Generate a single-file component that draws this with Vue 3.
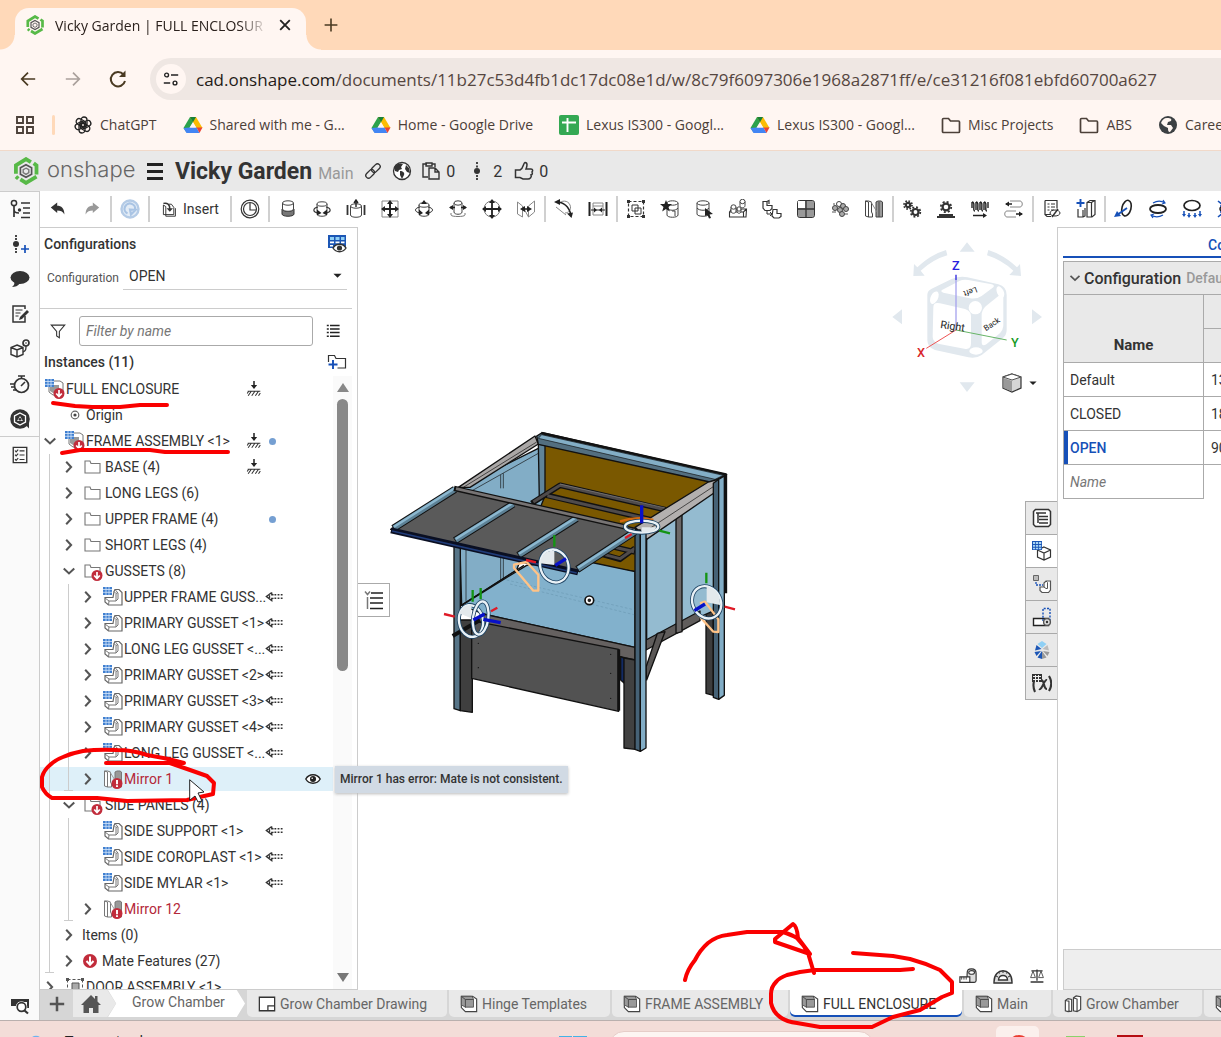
<script setup>
import { ref } from 'vue'

const S = 'fill="none" stroke="#333" stroke-width="1.2"'
const cyl = (x, y, w, h) => `<path d="M${x} ${y}v${h}c0 3 ${w} 3 ${w} 0v-${h}" fill="#fff" stroke="#444"/><ellipse cx="${x + w / 2}" cy="${y}" rx="${w / 2}" ry="2.2" fill="#fff" stroke="#444"/>`
const grid = '<path d="M0 0h9v8H0z" fill="#3f7fd0"/><path d="M0 2.5h9M0 5.3h9M3 0v8M6 0v8" stroke="#d4e6fa" stroke-width=".8"/>'
const badgeDown = '<circle cx="14" cy="14.500" r="5.500" fill="#c12c3b"/><path d="M14 11v6M11.200 14.500l2.800 3 2.800-3" fill="none" stroke="#fff" stroke-width="1.700"/>'
const badgeErr = '<circle cx="14" cy="14.500" r="5.500" fill="#c12c3b"/><path d="M14 11v4.300M14 16.300v1.700" stroke="#fff" stroke-width="1.900"/>'
const gear = (cx, cy, r) => `<circle cx="${cx}" cy="${cy}" r="${r}" fill="none" stroke="#333" stroke-width="2.200"/><circle cx="${cx}" cy="${cy}" r="${r + 1.8}" fill="none" stroke="#333" stroke-width="1.800" stroke-dasharray="${(r + 1.8) * 0.3927} ${(r + 1.8) * 0.3927}"/>`

const icons = {
  undo: '<path d="M1 8l8-6v4c5 0 9 3 9 11-2-4-5-5-9-5v3z" fill="#333"/>',
  redo: '<path d="M19 8l-8-6v4c-5 0-9 3-9 11 2-4 5-5 9-5v3z" fill="#999"/>',
  update: '<circle cx="10" cy="10" r="8.500" fill="#e3ecf6" stroke="#b4cbe6" stroke-width="2.400"/><path d="M7.500 14.500A5.300 5.300 0 1 1 15 11M10 10.500l5.500.5-4.500 4.500z" fill="none" stroke="#a9c4e4" stroke-width="2.200"/>',
  insert: `<path d="M3 5v12h13V8l-3-4h-3" ${S}/><path d="M3 3c5-1 8 1 8 7" fill="none" stroke="#333" stroke-width="1.800"/><path d="M7 9h8l-4 4.500z" fill="#333"/><path d="M3 5l3 2v12h12V9" ${S}/>`,
  clock: `<circle cx="10" cy="10" r="8.800" ${S}/><circle cx="10" cy="10" r="6.500" ${S}/><path d="M10 4v7h6" ${S}/>`,
  fasten: '<path d="M4 10v5c0 3 12 3 12 0v-5c-2 3-10 3-12 0z" fill="#777" stroke="#333"/>' + cyl(4.5, 4, 11, 6),
  revolve: cyl(5, 5, 10, 10) + '<path d="M6 8c-5 1-6 5 0 6M14 8c5 1 6 5 0 6" fill="none" stroke="#333" stroke-width="1.200"/><path d="M5 10.500v6L9.500 14zM15 10.500v6L10.500 14z" fill="#222"/>',
  slider: '<path d="M1.500 6v10M18.500 6v10" stroke="#333" stroke-width="1.800"/>' + cyl(4.5, 7, 11, 9) + '<path d="M10 1v7M8 4l2-3 2 3" fill="none" stroke="#222" stroke-width="1.400"/>',
  planar: '<path d="M2 2h16v16H2z" fill="none" stroke="#888"/><path d="M10 3v14M3 10h14" stroke="#222" stroke-width="2"/><path d="M7 5l3-4 3 4zM7 15l3 4 3-4zM5 7l-4 3 4 3zM15 7l4 3-4 3z" fill="#222"/>',
  cylindrical: cyl(5, 6, 10, 9) + '<path d="M6 8c-6 1-6 5 0 6M14 8c6 1 6 5 0 6" fill="none" stroke="#333"/><path d="M7 5l3-4 3 4zM5 10.500v6L9 14zM15 10.500v6L11 14z" fill="#222"/>',
  pin: cyl(6, 4, 8, 9) + '<path d="M3 14v2c0 2 14 2 14 0v-2" fill="none" stroke="#777"/><path d="M2 8.500h5M13 8.500h5" stroke="#222" stroke-width="1.600"/><path d="M5 6v5L1 8.500zM15 6v5l4-2.500z" fill="#222"/>',
  ball: '<circle cx="10" cy="10" r="8" fill="none" stroke="#777"/><path d="M10 2v16M1 10h18" stroke="#222" stroke-width="1.800"/><path d="M7 4l3-4 3 4zM7 16l3 4 3-4zM4 7l-4 3 4 3zM16 7l4 3-4 3z" fill="#222"/>',
  parallel: '<path d="M1.500 3l5 4v11l-5-3zM18.500 2l-6 5v11l6-5zM6.500 7l6 11" fill="none" stroke="#888"/><path d="M6 10h8" stroke="#222" stroke-width="1.600"/><path d="M9 7v6l-5-3zM11 7v6l5-3z" fill="#222"/>',
  tangent: '<path d="M5 5c2-4 9-4 11 1s-2 8-5 8M2 8l10 8" fill="none" stroke="#888"/><path d="M2 3c8 0 13 5 15 13" fill="none" stroke="#222" stroke-width="1.600"/><path d="M0 3l6-3v6zM13 14.500l6-1-1.500 5.500z" fill="#222"/>',
  width: '<path d="M1.500 3v14M18.500 3v14" stroke="#222" stroke-width="2"/><path d="M5 4h10v12H5zM5 7h10" fill="none" stroke="#888"/><path d="M3 11h14" stroke="#222"/><path d="M6 8.500v5L9 11zM14 8.500v5L11 11z" fill="#222"/>',
  group: '<path d="M2.500 2.500h15v15h-15z" fill="none" stroke="#333" stroke-width="1.200" stroke-dasharray="3 2"/><path d="M1 1h3v3H1zM16 1h3v3h-3zM1 16h3v3H1zM16 16h3v3h-3z" fill="#333"/><path d="M6 6h6v6H6zM9 9h6v6H9z" fill="none" stroke="#333"/>',
  matefav: cyl(7, 4, 11, 12) + '<path d="M7 9c2 3 9 3 11 0M12 12h3v5" fill="none" stroke="#444"/><path d="M6 1l1.600 4H12L8.500 8l1.300 4.500L6 10l-3.800 2.500L3.500 8 0 5h4.400z" fill="#222"/>',
  mateconn: cyl(3, 4, 12, 11) + '<path d="M3 9c2 3 10 3 12 0" fill="none" stroke="#444"/><path d="M11 9l8 6-3.500.5L17 19l-2 .5-1.500-3.500L11 17z" fill="#222"/>',
  replicate: '<path d="M1.500 13l2-3h15l-.5 8H1.500zM1.500 13h14l3-3M15.500 13v5" fill="#fff" stroke="#333" stroke-width="1.100"/>' + cyl(3, 8, 5, 4) + cyl(12, 2.5, 5, 4) + cyl(9, 10, 4, 2),
  pattern: '<path d="M1 2.500h4v4h5v3l-2 2H3L1 9zM5 2.500l2-1v3.500M11 10.500h4v4h4v3l-2 1.500h-5l-2-2z" fill="#fff" stroke="#333" stroke-width="1.200"/><path d="M5 12v3h5M8 13l2 2-2 2" fill="none" stroke="#333"/>',
  linear: '<path d="M1.500 3.500c0-1 .5-2 2-2h13c1 0 2 1 2 2v13c0 1-1 2-2 2h-13c-1 0-2-1-2-2z" fill="#999" stroke="#333"/><path d="M2 2h7v7H2z" fill="#fff"/><path d="M10 1.500v17M1.500 10h17" stroke="#333" stroke-width="1.300"/>',
  circular: '<g fill="#aaa" stroke="#444"><circle cx="9" cy="5" r="2.500" fill="#fff"/><circle cx="5" cy="9" r="2.500"/><circle cx="13" cy="7" r="2.500"/><circle cx="10" cy="11" r="2.500"/><circle cx="16" cy="10" r="2.500"/><circle cx="12" cy="15" r="2.500"/></g><path d="M3 5h2M2 13h4M15 15h3" stroke="#555"/>',
  mirror: '<path d="M1.500 2l3 1v15l-3-1zM1.500 2h3l3 1v10l1 2v3h-4" fill="#fff" stroke="#444"/><path d="M12 14V3l2-1h3l1.500 1v15H12z" fill="#999" stroke="#444"/><path d="M15 3v15" stroke="#444"/><path d="M7 3l6 10" stroke="#888"/>',
  gear: gear(6, 6, 2.2) + gear(13.5, 13, 3),
  rack: gear(10, 8, 3.4) + '<path d="M3 15h14v2h2v2H1v-2h2z" fill="#333"/>',
  screw: '<path d="M2 3c4 0 0 9 3 9M6 3c4 0 0 9 3 9M10 3c4 0 0 9 3 9M14 3c4 0 0 9 3 9M2 3v6M6 3v8M10 3v8M14 3v8M18 3v6" fill="none" stroke="#222" stroke-width="1.400"/><path d="M3 16.500h12" stroke="#222" stroke-width="1.500"/><path d="M13 14l4 2.500-4 2.500z" fill="#222"/>',
  belt: '<path d="M6 2h10c3 0 3 6 0 6H6M12 12H3c-3 0-3 6 0 6h9" fill="none" stroke="#888"/><path d="M2 5h6M12 15h6" stroke="#222" stroke-width="1.500"/><path d="M5 2.500v5L1 5zM15 12.500v5l4-2.500z" fill="#222"/>',
  bom: '<path d="M3 1.500h12v8M3 1.500v14h6M3 15.500l2 2h4" fill="none" stroke="#333" stroke-width="1.200"/><path d="M5.500 5h2M9 5h4M5.500 8h2M9 8h4M5.500 11h2M9 11h3" stroke="#333"/><ellipse cx="13" cy="14" rx="5" ry="3" fill="#fff" stroke="#333"/><path d="M10 18l6-8" stroke="#333" stroke-width="1.400"/>',
  addpart: '<path d="M4.500 0v8M.5 4h8" stroke="#1650b8" stroke-width="1.900"/><path d="M2 10v8h5V11M7 18l2-1V9M11 3.500l3-2h5v14l-3 2.500h-5zM11 3.500h4.500v14M15.500 3.500l3-2" fill="none" stroke="#333" stroke-width="1.200"/>',
  arrow1: '<ellipse cx="12.500" cy="9" rx="4.500" ry="8" transform="rotate(15 12 9)" fill="none" stroke="#222" stroke-width="1.600"/><path d="M13 9l-10 7" stroke="#1650b8" stroke-width="1.800"/><path d="M0 18l3-6 4 5z" fill="#1650b8"/>',
  arrow2: '<ellipse cx="10" cy="10" rx="8" ry="4" fill="none" stroke="#222" stroke-width="1.800"/><path d="M5 4c5-3 9-2 12 0M15 16c-5 3-9 2-12 0M15 1l2 3-3 1M5 19l-2-3 3-1" fill="none" stroke="#1650b8" stroke-width="1.200"/>',
  arrow3: '<ellipse cx="10" cy="6.500" rx="8" ry="5" fill="none" stroke="#222" stroke-width="1.700"/><path d="M2 12v4M7 14v3M13 14v3M18 12v4" stroke="#1650b8" stroke-width="1.500"/><path d="M0 15h4l-2 3zM5 16h4l-2 3zM11 16h4l-2 3zM16 15h4l-2 3z" fill="#1650b8"/>',
  arrow4: '<ellipse cx="12" cy="10" rx="8" ry="4" fill="none" stroke="#222" stroke-width="1.600"/><path d="M2 2l6 5M2 18l6-5M8 3v4H4M8 17v-4H4" fill="none" stroke="#1650b8" stroke-width="1.600"/>',
  tree: '<circle cx="4" cy="4" r="2.600" fill="none" stroke="#333" stroke-width="1.500"/><path d="M4 7v3c0 3 1 4 5 4M4 10v8M11 4h9M13 9h7M13 14h7M11 18.500h9" fill="none" stroke="#333" stroke-width="1.700"/><circle cx="9.500" cy="11" r="1.700" fill="#333"/>',
  version: '<path d="M6 1v2M6 4v2M6 14v2M6 17v2" stroke="#333" stroke-width="1.800"/><circle cx="6" cy="10" r="3" fill="#333"/><path d="M15 11v8M11 15h8" stroke="#1650b8" stroke-width="1.700"/>',
  comment: '<ellipse cx="10" cy="8.500" rx="9.500" ry="6.500" fill="#333"/><path d="M4 12c1 3 0 4-2 6 3 0 6-1 8-4z" fill="#333"/>',
  notes: `<path d="M15 12v6H3V2h12v3" fill="none" stroke="#333" stroke-width="1.500"/><path d="M5.500 6h7M5.500 9h5M5.500 12h3" ${S}/><path d="M17 6l2 2-7 7-3 1 1-3z" fill="#333"/>`,
  cubeq: '<path d="M7 6l6 2.500v7L7 18l-6-2.500v-7zM1 8.500l6 2.500 6-2.500M7 11v7" fill="none" stroke="#333" stroke-width="1.400"/><circle cx="16" cy="4" r="3" fill="none" stroke="#333" stroke-width="1.700"/><path d="M16 7c0 3 0 5-3 6" fill="none" stroke="#333" stroke-width="1.300"/><circle cx="16" cy="4" r=".8" fill="#333"/>',
  timer: '<circle cx="11.500" cy="11.500" r="7" fill="none" stroke="#333" stroke-width="1.700"/><path d="M8 2h7M11.500 2v3M11 12l4-4M0 10h5M1 13h4M3 16h4" stroke="#333" stroke-width="1.600"/>',
  learn: '<circle cx="10" cy="10" r="9.800" fill="#333"/><path d="M13 13l6 6.500V11z" fill="#333"/><path d="M10 4l5.500 3v6L10 16l-5.500-3V7z" fill="none" stroke="#fff" stroke-width="1.300"/><path d="M7 12l3-5 3 5z" fill="#ddd"/><circle cx="10" cy="10.300" r="1.300" fill="#333"/>',
  checklist: '<path d="M2.500 1.500h15v17h-15z" fill="none" stroke="#333" stroke-width="1.500"/><path d="M9.500 5.500H15M9.500 10H15M9.500 15H15M4.500 5l1.200 1.500L8 4M4.500 9.500l1.200 1.500L8 8.500M4.500 14.500l1.200 1.500L8 13.500" fill="none" stroke="#333" stroke-width="1.300"/>',
  searchtab: '<path d="M1 4h18v3L8 7v4H1z" fill="#333"/><path d="M18 7v6" stroke="#333" stroke-width="2"/><circle cx="11.500" cy="12" r="5.800" fill="#fafafa"/><circle cx="11.500" cy="12" r="4.300" fill="#fff" stroke="#333" stroke-width="1.700"/><path d="M14.500 15.500l3.500 3" stroke="#333" stroke-width="2.200"/>',
  asm: '<path d="M4 6l5-4h6l3 2v12H8l-4-3z" fill="#fff" stroke="#777"/><path d="M5 8l3-2h6v8H8l-3-2z" fill="#999"/>' + grid + badgeDown,
  part: '<path d="M11 4.500l1-2h4l3 3V18H5.500l-3.500-3v-4.500h8z" fill="#fff" stroke="#666" stroke-width="1.200"/><path d="M2 11l4 3h7V6.500l-2-2M6 14l-.5 4M13 14l2-2V6l-3-3.500M13 6.500l2-1" fill="none" stroke="#777"/>' + grid,
  mirrorerr: '<path d="M1.500 2l3 1v15l-3-1zM1.500 2h3l3 1v10l1 2v3h-4" fill="#fff" stroke="#777"/><path d="M12 14V3l2-1h3l1.500 1v15H12z" fill="#999" stroke="#777"/><path d="M7 3l6 10" stroke="#999"/>' + badgeErr,
  folder: '<path d="M2 16V4h5l1 2.500h9V16z" fill="#fff" stroke="#777" stroke-width="1.100"/>',
  foldererr: '<path d="M2 16V4h5l1 2.500h9V16z" fill="#fff" stroke="#777" stroke-width="1.100"/>' + badgeDown,
  down: '<circle cx="9" cy="10" r="7" fill="#c12c3b"/><path d="M9 5.500v7M5.500 10L9 13.800l3.500-3.800" fill="none" stroke="#fff" stroke-width="2"/>',
  origin: '<circle cx="10" cy="10" r="3.800" fill="none" stroke="#666" stroke-width="1.200"/><circle cx="10" cy="10" r="1.600" fill="#444"/>',
  door: '<path d="M2.500 2.500h15v14h-15z" fill="none" stroke="#555" stroke-dasharray="3 2"/><path d="M1 1h3v3H1zM16 1h3v3h-3z" fill="#555"/><path d="M7 6h7v9H7z" fill="#aaa" stroke="#555"/>',
  ground: '<path d="M10 1v6" stroke="#222" stroke-width="1.700"/><path d="M6.500 5.500h7L10 10z" fill="#222"/><path d="M3 12.500h14M3.500 17.500l3.500-5M7.500 17.500l3.500-5M11.500 17.500l3.500-5M15 17.500l2-3M2.500 15l1.500-2.500" stroke="#333" stroke-width="1.200"/>',
  infix: '<path d="M7.500 5L1.500 9.500l6 4.500v-2.500h2M7.500 5v2.500h2M5 8v3" fill="none" stroke="#333" stroke-width="1.500"/><path d="M10.500 7.500H20M10.500 11.500H20" stroke="#333" stroke-width="1.700" stroke-dasharray="2 1.500"/>',
  eye: '<path d="M1 10c4-7 14-7 18 0-4 7-14 7-18 0z" fill="#fff" stroke="#222" stroke-width="1.800"/><circle cx="10" cy="10" r="3.800" fill="#222"/><circle cx="9" cy="9" r="1" fill="#fff"/>',
  cfgeye: '<path d="M1 1h18v13H1z" fill="#1c56b5"/><path d="M3 3h4v3H3zM8.500 3h4v3h-4zM14 3h3.500v3H14z" fill="#8fd0f5"/><path d="M3 7.500h4v1.700H3zM8.500 7.500h4v1.700h-4zM14 7.500h3.500v1.700H14zM3 11h3v1.500H3z" fill="#fff"/><path d="M6 14c3-5 10-5 13 0-3 5-10 5-13 0z" fill="#fff" stroke="#333" stroke-width="1.400"/><circle cx="12.500" cy="14" r="2.600" fill="#333"/>',
  funnel: '<path d="M2.500 3.500h15l-6 7v7l-3-2v-5z" fill="none" stroke="#333" stroke-width="1.200"/>',
  list: '<path d="M1 3h2.500M1 7.500h2.500M1 12h2.500M1 16.500h2.500M5 3h12M5 7.500h12M5 12h12M5 16.500h12" stroke="#222" stroke-width="1.900"/>',
  addfolder: '<path d="M1.500 10V3.500h6l1.500 3h9.500V16h-8" fill="none" stroke="#333" stroke-width="1.200"/><path d="M6 8v9M1.500 12.500h9" stroke="#1650b8" stroke-width="1.900"/>',
  flyout: '<path d="M1 1.500l2.500 3L6 1.500M3.500 7v12" fill="none" stroke="#777" stroke-width="1.500"/><path d="M7 3h12M6 8h13M6 13h13M6 18.500h13" stroke="#222" stroke-width="1.300"/>',
  p1: '<path d="M3.500 1.500h13l2 2v13l-2 2h-13l-2-2v-13z" fill="#fff" stroke="#333" stroke-width="1.500"/><path d="M4 5h10M7 8.500h9M7 11.500h9M7 15h9M6 5v10" stroke="#333" stroke-width="1.500"/>',
  p2: '<path d="M12 6l6.500 3v7L12 19l-6.500-3V9zM5.500 9l6.500 3 6.500-3M12 12v7" fill="#fff" stroke="#333" stroke-width="1.200"/><path d="M0 0h10v9H0z" fill="#1c56b5"/><path d="M1 1h2.200v2H1zM4 1h2.200v2H4zM7 1h2.200v2H7zM1 4h2.200v1.700H1zM4 4h2.200v1.700H4zM7 4h2.200v1.700H7zM1 6.700h2.200v1.500H1zM4 6.700h2.200v1.500H4zM7 6.700h2.200v1.500H7z" fill="#a9d5f5"/>',
  p3: '<path d="M1.500 1.500h5v5h-5z" fill="#bbb" stroke="#666"/><path d="M4 8v3h7" fill="none" stroke="#1650b8" stroke-width="1.300" stroke-dasharray="2 1"/><path d="M8 13h4V9l2-2h4.500v9l-2 2.500H10l-2-2z" fill="#fff" stroke="#555" stroke-width="1.200"/><path d="M12 13l2 1.500h1.500V8.500L14 7" fill="none" stroke="#555"/>',
  p4: '<path d="M1.500 11.500h15v7h-15z" fill="#fff" stroke="#222" stroke-width="1.400"/><path d="M11 14V1.500h7V15" fill="none" stroke="#1650b8" stroke-width="1.400" stroke-dasharray="2 1.300"/><circle cx="15" cy="15" r="3.400" fill="#ddd" stroke="#555" stroke-width="1.400"/><circle cx="15" cy="15" r="1.200" fill="#333"/>',
  p5: '<path d="M10 1l4.500 3L10 8 5.500 4z" fill="#8fd0f5"/><path d="M4.500 5l5 4-6.500 1.500zM2.500 12l6.500-1-4.500 5zM5.500 17.500L10 11v8z" fill="#1c56b5"/><path d="M15.500 5l-5 4 6.500 1.500z" fill="#bbb"/><path d="M17.500 12l-6.500-1 4.500 5zM14.500 17.500L10 11v8z" fill="#999"/>',
  p6: '<path d="M2 8c-1 4-1 7 1 11M17 3c3 5 3 10 0 15M7 16c3 2 5-10 8-9M9 7c4 0 2 9 6 9" fill="none" stroke="#333" stroke-width="2.100"/><path d="M0 1h10v8H0z" fill="#333"/><path d="M1 3.500h8M1 6.500h8M3.500 2v7M6.500 2v7" stroke="#eee"/>',
  drawing: '<path d="M1.500 2.500h17v15h-17zM11 17v-5h7" fill="#fff" stroke="#333" stroke-width="1.400"/>',
  asmtab: '<path d="M1.500 1.500H14l4.500 3V18.500H6L1.500 14z" fill="#fff" stroke="#444" stroke-width="1.300"/><path d="M1.500 1.500H13l2 3v9H6L1.500 11z" fill="#999" stroke="#555"/><path d="M1.500 1.500L6 5h9M6 5v9" fill="none" stroke="#444"/>',
  parttab: '<path d="M1.500 6l3-2 4 1v13l-4 .5-3-1zM1.500 6l4 1v11M10.500 3l3-2 5 1v14l-4 2.500-4-1zM10.500 3l4 1.500v14" fill="#fff" stroke="#444" stroke-width="1.300"/>',
  tape: '<path d="M9 8c0-5 1-6 5-6s5 2 5 5v8c0 1-1 2-2 2H9z" fill="#ddd" stroke="#333" stroke-width="1.300"/><path d="M1 11h11v6H1z" fill="#fff" stroke="#333" stroke-width="1.300"/><path d="M3 11v3M5.500 11v3M8 11v3" stroke="#333"/><ellipse cx="14" cy="6" rx="3.200" ry="2" fill="#fff" stroke="#333" stroke-width="1.200"/>',
  protractor: '<path d="M1 16C1 1 19 1 19 16v1H1z" fill="#ddd" stroke="#333" stroke-width="1.400"/><path d="M5.500 14c0-6 9-6 9 0z" fill="#fff" stroke="#333" stroke-width="1.400"/><path d="M3 10l2 1M10 5v2M17 10l-2 1M5.500 6l1 1.500M14.500 6l-1 1.500" stroke="#333"/>',
  scale: '<path d="M10 2v14M3 3.500h14M2 17.500h16" stroke="#333" stroke-width="1.600"/><path d="M5 4l-3 8h6zM15 4l-3 8h6z" fill="none" stroke="#333"/>',
  home: '<path d="M10 1L0 11h2.500v8H8v-5h4v5h5.500v-8H20l-3.500-3.500V2H14v3z" fill="#555"/>',
  link: '<g transform="rotate(-45 10 10)" fill="none" stroke="#333" stroke-width="1.500"><rect x="0" y="7" width="11" height="6" rx="3"/><rect x="9" y="7" width="11" height="6" rx="3"/></g>',
  globe: '<circle cx="10" cy="10" r="8.500" fill="#fff" stroke="#333" stroke-width="1.300"/><path d="M3 5c3-3 6-3 8-2l-2 3 1 2-3 1-1 2-3-1-1-3zM8 10c3 0 5 2 4 4l-2 4-2-4zM14 4l3 3 1 5-3-1-2-3z" fill="#333"/>',
  copy: '<path d="M6 3H2v13h5M14 6V3h-3M5 2h6v3H5zM8 7h6l4 4v7H8zM14 7v4h4" fill="none" stroke="#333" stroke-width="1.400"/>',
  dots: '<path d="M10 1v2M10 4.500v2M10 14v2M10 17v2" stroke="#333" stroke-width="1.800"/><circle cx="10" cy="10" r="3" fill="#333"/>',
  thumb: '<path d="M1.500 9H6c4-2 3-7 5-7.500 3 0 2 4 1 6.500h5c2 0 2 2 1 3 1 1 0 3-1 3 1 2-1 4-3 4H9l-3-1.500H1.500z" fill="none" stroke="#333" stroke-width="1.500"/>',
  logo: '<path d="M2.800 12V6L10 1.500l3.500 2.200M15.500 4.500l2 1.500v6.500M17.500 14L10 18.500l-4-2.500M4.500 15.500L2.800 14" fill="none" stroke="#57b947" stroke-width="2.700"/><path d="M10 5.500l4 2.200v4.600L10 14.500l-4-2.200V7.700z" fill="none" stroke="#555" stroke-width="1.200"/><path d="M10 8l2 1v2.200l-2 1.200-2-1.200V9z" fill="none" stroke="#777"/>',
  apps: '<path d="M2 2h6v6H2zM12 2h6v6h-6zM2 12h6v6H2zM12 12h6v6h-6z" fill="none" stroke="#4c4039" stroke-width="1.900"/>',
  gpt: '<g fill="none" stroke="#222" stroke-width="1.300"><rect x="8" y="2" width="6" height="10" rx="3"/><rect x="8" y="2" width="6" height="10" rx="3" transform="rotate(60 10 10)"/><rect x="8" y="2" width="6" height="10" rx="3" transform="rotate(120 10 10)"/><rect x="8" y="2" width="6" height="10" rx="3" transform="rotate(180 10 10)"/><rect x="8" y="2" width="6" height="10" rx="3" transform="rotate(240 10 10)"/><rect x="8" y="2" width="6" height="10" rx="3" transform="rotate(300 10 10)"/></g>',
  drive: '<path d="M7 2h6l-3 5-6.500 10.500L.5 13z" fill="#2ba24c"/><path d="M7 2h6l6.500 11h-6z" fill="#fbbc04"/><path d="M7 2h6l-3 5.200z" fill="#188038"/><path d="M.5 13l3 5h13l-3-5.500h-7z" fill="#4285f4"/><path d="M13.500 12.500h6l-3 5.500z" fill="#ea4335"/><path d="M10 7.500l3 5H7z" fill="#fff6f1"/>',
  sheet: '<rect width="20" height="20" rx="2" fill="#34a853"/><path d="M3 7.500h14M8.500 3v14" stroke="#fff" stroke-width="1.900"/>',
  bfolder: '<path d="M1.500 16.500v-12q0-1 1-1h5l2 2.500h8q1 0 1 1v9.500q0 1-1 1h-15q-1 0-1-1z" fill="none" stroke="#4c4039" stroke-width="1.700"/>',
  bglobe: '<circle cx="10" cy="10" r="9" fill="#3c4043"/><path d="M9 3c4 0 5 1 4 3l-3 1-1 3 4 0 2 3-3 4c-2 0-2-2-2-4l-4-2-3-3c1-3 3-5 6-5z" fill="#fff6f1"/>',
  back: '<path d="M18 10H3M10 3l-7 7 7 7" fill="none" stroke="#4a3a22" stroke-width="1.900"/>',
  fwd: '<path d="M2 10h15M10 3l7 7-7 7" fill="none" stroke="#aaa09c" stroke-width="1.900"/>',
  reload: '<path d="M15.500 5.500A7.200 7.200 0 1 0 17 12" fill="none" stroke="#4a3a22" stroke-width="2"/><path d="M17.500 1.500V8H11z" fill="#4a3a22"/>',
  tune: '<path d="M10 5h9M1 15h8" stroke="#222" stroke-width="1.800"/><circle cx="4.500" cy="5" r="2.400" fill="none" stroke="#222" stroke-width="1.700"/><circle cx="15" cy="15" r="2.400" fill="none" stroke="#222" stroke-width="1.700"/>',
  cross: '<path d="M4 4l12 12M16 4L4 16" stroke="#222" stroke-width="2.300"/>',
  plus: '<path d="M10 2v16M2 10h16" stroke="#4a3a22" stroke-width="2"/>',
  plusg: '<path d="M10 2v16M2 10h16" stroke="#555" stroke-width="2.800"/>',
  right: '<path d="M6 2.500l7 7.500-7 7.500" fill="none" stroke="#555" stroke-width="2.900"/>',
  downc: '<path d="M2.500 6.500l7.500 7 7.500-7" fill="none" stroke="#555" stroke-width="2.900"/>',
  cube: '<path d="M10 1l9 3v11l-9 4-9-4V4z" fill="#d5d5d5" stroke="#333" stroke-width="1.200"/><path d="M1 4l9 3 9-3-9-3z" fill="#fff" stroke="#555"/><path d="M1.500 5L10 8v10.500L1.500 15z" fill="#999"/>',
  caret: '<path d="M1 6h18l-9 9z" fill="#222"/>'
}

const bookmarks = [
  ['gpt', 'ChatGPT'], ['drive', 'Shared with me - G...'], ['drive', 'Home - Google Drive'], ['sheet', 'Lexus IS300 - Googl...'],
  ['drive', 'Lexus IS300 - Googl...'], ['bfolder', 'Misc Projects'], ['bfolder', 'ABS'], ['bglobe', 'Careers']
]
const toolGroups = [
  ['clock'],
  ['fasten', 'revolve', 'slider', 'planar', 'cylindrical', 'pin', 'ball', 'parallel'],
  ['tangent', 'width'],
  ['group', 'matefav', 'mateconn', 'replicate', 'pattern', 'linear', 'circular', 'mirror'],
  ['gear', 'rack', 'screw', 'belt'],
  ['bom', 'addpart'],
  ['arrow1', 'arrow2', 'arrow3', 'arrow4']
]
const rail = ['tree', 'version', 'comment', 'notes', 'cubeq', 'timer', 'learn']
const part = (text, chev) => ({ text, lvl: 3, icon: 'part', chev, infix: true, g: 2 })
const rows = [
  { text: 'FULL ENCLOSURE', lvl: 0, icon: 'asm', ground: true, slot: true },
  { text: 'Origin', lvl: 1, icon: 'origin' },
  { text: 'FRAME ASSEMBLY <1>', lvl: 1, icon: 'asm', chev: 'downc', ground: true, dot: true },
  { text: 'BASE (4)', lvl: 2, icon: 'folder', chev: 'right', ground: true, slot: true, g: 1 },
  { text: 'LONG LEGS (6)', lvl: 2, icon: 'folder', chev: 'right', g: 1 },
  { text: 'UPPER FRAME (4)', lvl: 2, icon: 'folder', chev: 'right', dot: true, g: 1 },
  { text: 'SHORT LEGS (4)', lvl: 2, icon: 'folder', chev: 'right', g: 1 },
  { text: 'GUSSETS (8)', lvl: 2, icon: 'foldererr', chev: 'downc', g: 1 },
  part('UPPER FRAME GUSS...', 'right'),
  part('PRIMARY GUSSET <1>', 'right'),
  part('LONG LEG GUSSET <...', 'right'),
  part('PRIMARY GUSSET <2>', 'right'),
  part('PRIMARY GUSSET <3>', 'right'),
  part('PRIMARY GUSSET <4>', 'right'),
  part('LONG LEG GUSSET <...', 'right'),
  { text: 'Mirror 1', lvl: 3, icon: 'mirrorerr', chev: 'right', err: true, eye: true, hover: true, g: 2, end: true },
  { text: 'SIDE PANELS (4)', lvl: 2, icon: 'foldererr', chev: 'downc', g: 1 },
  part('SIDE SUPPORT <1>'),
  part('SIDE COROPLAST <1>'),
  part('SIDE MYLAR <1>'),
  { text: 'Mirror 12', lvl: 3, icon: 'mirrorerr', chev: 'right', err: true, g: 2, end: true },
  { text: 'Items (0)', lvl: 2, chev: 'right', g: 1 },
  { text: 'Mate Features (27)', lvl: 2, icon: 'down', chev: 'right', g: 1, endOuter: true },
  { text: 'DOOR ASSEMBLY <1>', lvl: 1, icon: 'door', chev: 'right' }
]
const panels = ['p1', 'p2', 'p3', 'p4', 'p5', 'p6']
const tabs = [
  { icon: 'drawing', text: 'Grow Chamber Drawing', w: 'w200' },
  { icon: 'asmtab', text: 'Hinge Templates', w: 'w161' },
  { icon: 'asmtab', text: 'FRAME ASSEMBLY', w: 'w176' },
  { icon: 'asmtab', text: 'FULL ENCLOSURE', w: 'w172', active: true },
  { icon: 'asmtab', text: 'Main', w: 'w87' },
  { icon: 'parttab', text: 'Grow Chamber', w: 'w149' },
  { icon: 'asmtab', text: 'Frame', w: 'w87' }
]
const configs = [['Default', '135 deg'], ['CLOSED', '180 deg'], ['OPEN', '90 deg']]
const configuration = ref('OPEN')
const filter = ref('')
</script>

<template>
  <div class="page">
    <div class="strip">
      <div class="btab">
        <svg class="i20" viewBox="0 0 20 20" v-html="icons.logo"></svg>
        <span class="btitle">Vicky Garden | FULL ENCLOSURE</span>
        <button class="plain" aria-label="Close tab"><svg class="i16" viewBox="0 0 20 20" v-html="icons.cross"></svg></button>
      </div>
      <button class="plain newtab" aria-label="New tab"><svg class="i16" viewBox="0 0 20 20" v-html="icons.plus"></svg></button>
    </div>
    <div class="address">
      <button class="plain nav" aria-label="Back"><svg class="i18" viewBox="0 0 20 20" v-html="icons.back"></svg></button>
      <button class="plain nav" aria-label="Forward"><svg class="i18" viewBox="0 0 20 20" v-html="icons.fwd"></svg></button>
      <button class="plain nav" aria-label="Reload"><svg class="i20" viewBox="0 0 20 20" v-html="icons.reload"></svg></button>
      <div class="omni">
        <button class="plain site" aria-label="Site information"><svg class="i16" viewBox="0 0 20 20" v-html="icons.tune"></svg></button>
        <span class="url"><b>cad.onshape.com</b>/documents/11b27c53d4fb1dc17dc08e1d/w/8c79f6097306e1968a2871ff/e/ce31216f081ebfd60700a627</span>
      </div>
    </div>
    <nav class="marks">
      <button class="plain" aria-label="Apps"><svg class="i20" viewBox="0 0 20 20" v-html="icons.apps"></svg></button>
      <span class="msep"></span>
      <a v-for="(b, i) in bookmarks" :key="i" href="#" class="mark">
        <svg class="i20" viewBox="0 0 20 20" v-html="icons[b[0]]"></svg><span>{{ b[1] }}</span>
      </a>
    </nav>

    <header class="head">
      <svg class="logo" viewBox="0 0 20 20" v-html="icons.logo"></svg>
      <span class="brand">onshape</span>
      <button class="burger" aria-label="Menu"><i></i><i></i><i></i></button>
      <h1>Vicky Garden</h1>
      <span class="branch">Main</span>
      <svg class="i18" viewBox="0 0 20 20" v-html="icons.link"></svg>
      <svg class="i20 hg" viewBox="0 0 20 20" v-html="icons.globe"></svg>
      <svg class="i20 hc" viewBox="0 0 20 20" v-html="icons.copy"></svg><span class="cnt">0</span>
      <svg class="i20 hd" viewBox="0 0 20 20" v-html="icons.dots"></svg><span class="cnt wide">2</span>
      <svg class="i20 hd" viewBox="0 0 20 20" v-html="icons.thumb"></svg><span class="cnt">0</span>
    </header>

    <div class="work">
      <aside class="rail">
        <button v-for="r in rail" :key="r" class="plain railb" :aria-label="r"><svg class="i20" viewBox="0 0 20 20" v-html="icons[r]"></svg></button>
        <button class="plain railb lined" aria-label="Checklist"><svg class="i18" viewBox="0 0 20 20" v-html="icons.checklist"></svg></button>
        <button class="plain railb last" aria-label="Search tabs"><svg class="i20" viewBox="0 0 20 20" v-html="icons.searchtab"></svg></button>
      </aside>
      <div class="main">
        <div class="tools">
          <button class="plain tool" aria-label="Undo"><svg class="i16" viewBox="0 0 20 20" v-html="icons.undo"></svg></button>
          <button class="plain tool" aria-label="Redo"><svg class="i16" viewBox="0 0 20 20" v-html="icons.redo"></svg></button>
          <span class="tsep"></span>
          <button class="plain tool" aria-label="Update"><svg class="i20" viewBox="0 0 20 20" v-html="icons.update"></svg></button>
          <span class="tsep"></span>
          <button class="plain tool insert"><svg class="i16" viewBox="0 0 20 20" v-html="icons.insert"></svg>Insert</button>
          <template v-for="(g, i) in toolGroups" :key="i">
            <span class="tsep"></span>
            <button v-for="t in g" :key="t" class="plain tool" :aria-label="t"><svg class="i20" viewBox="0 0 20 20" v-html="icons[t]"></svg></button>
          </template>
        </div>

        <div class="content">
          <section class="side">
            <div class="srow title"><strong>Configurations</strong><svg class="i20" viewBox="0 0 20 20" v-html="icons.cfgeye"></svg></div>
            <div class="cfg">
              <label for="cfg">Configuration</label>
              <div class="selwrap">
                <select id="cfg" v-model="configuration"><option>OPEN</option><option>CLOSED</option><option>Default</option></select>
                <svg class="selcaret" viewBox="0 0 20 20" v-html="icons.caret"></svg>
              </div>
            </div>
            <div class="filter">
              <svg class="i18" viewBox="0 0 20 20" v-html="icons.funnel"></svg>
              <input v-model="filter" type="text" placeholder="Filter by name" aria-label="Filter by name" />
              <svg class="i16" viewBox="0 0 20 20" v-html="icons.list"></svg>
            </div>
            <div class="srow inst"><strong>Instances (11)</strong><svg class="i20" viewBox="0 0 20 20" v-html="icons.addfolder"></svg></div>
            <div class="treewrap">
              <div class="tree">
                <div v-for="(r, i) in rows" :key="i" :class="['row', 'l' + r.lvl, { hover: r.hover, err: r.err }]">
                  <span v-if="r.g" :class="['guide', 'g1', { end: r.endOuter }]"></span>
                  <span v-if="r.g === 2" :class="['guide', 'g2', { end: r.end }]"></span>
                  <span class="chev"><svg v-if="r.chev" viewBox="0 0 20 20" v-html="icons[r.chev]"></svg></span>
                  <svg v-if="r.icon" :class="['ricon', r.icon]" viewBox="0 0 20 20" v-html="icons[r.icon]"></svg>
                  <span :class="['name', { bare: !r.icon }]">{{ r.text }}</span>
                  <span class="flags">
                    <svg v-if="r.ground" class="i18" viewBox="0 0 20 20" v-html="icons.ground"></svg>
                    <svg v-if="r.infix" class="i18" viewBox="0 0 20 20" v-html="icons.infix"></svg>
                    <span v-if="r.slot || r.dot" class="slot"><i v-if="r.dot" class="dot"></i></span>
                  </span>
                  <span class="eyes"><svg v-if="r.eye" class="i16" viewBox="0 0 20 20" v-html="icons.eye"></svg></span>
                </div>
              </div>
              <div class="scroll"><i class="up"></i><i class="thumb"></i><i class="grow"></i><i class="dn"></i></div>
            </div>
          </section>

          <section class="view">
            <svg class="model" viewBox="0 0 1110 1020" stroke-linejoin="round">
              <g stroke="#111" stroke-width="4">
                <path d="M978 580L1000 560V826L978 820Z" fill="#3d3d3d" />
                <path d="M492 72L990 185L770 340V455L600 430L440 330L475 240Z" fill="#7a5800" />
                <path d="M235 205L475 85L492 90V235L450 340L410 450L245 556L240 380Z" fill="#82adc6" />
                <path d="M475 72L495 75V232L478 240Z" fill="#608499" />
                <path d="M262 220L475 100M362 165V205M370 160V205M258 390V545M362 410V480M370 410V474" fill="none" stroke-width="2" />
                <path d="M245 556L440 436L600 420L765 455V682L310 582Z" fill="#82b1cc" />
              </g>
              <g fill="none">
                <path d="M455 250L540 196L860 270M500 226L850 308M640 395L720 418L765 385M690 378L765 396" stroke="#111" stroke-width="17" />
                <path d="M460 246L540 196L856 269M502 227L846 307M640 395L720 416L765 385M692 379L762 395" stroke="#4f4b4b" stroke-width="9" />
                <path d="M540 192L856 264" stroke="#8b8888" stroke-width="2" />
              </g>
              <g stroke="#111" stroke-width="4">
                <path d="M380 480L765 570M390 492L765 585" stroke="#54849b" stroke-width="1" stroke-dasharray="8 6" fill="none" />
                <path d="M800 350L1002 212V572L800 662Z" fill="#94bbd0" />
                <path d="M798 660L960 573V602L798 690Z" fill="#605d5c" />
                <path d="M888 292L906 280V635L888 640Z" fill="#6b6868" />
                <path d="M798 742L832 640L855 635L800 780Z" fill="#5a5756" />
                <path d="M465 48L475 72L270 202L235 202Z" fill="#aaa7a6" />
                <path d="M470 66L250 202" fill="none" stroke-width="2" />
                <path d="M470 48L487 38L1040 164L1015 176L990 186L475 73Z" fill="#536f80" />
                <path d="M485 44L1030 166L1005 178L475 55Z" fill="#83aec6" stroke-width="2" />
                <path d="M484 39L1038 163V520" fill="none" stroke-width="7" />
                <path d="M985 186L1015 178V210L800 358L765 322Z" fill="#b3b0af" />
                <path d="M1015 190L790 338" fill="none" stroke-width="2" />
                <path d="M1000 190L1016 178V838L1000 832Z" fill="#466276" />
                <path d="M1016 178L1033 168V826L1016 838Z" fill="#82adc6" />
                <path d="M222 375L241 380V872L222 866Z" fill="#577588" />
                <path d="M241 600H277V877L241 872Z" fill="#3f3f3f" />
                <path d="M310 582L765 682V720L275 612Z" fill="#656160" />
                <path d="M275 602L716 688V874L275 775Z" fill="#525252" />
                <path d="M716 688V872" stroke-width="9" /><path d="M722 710V780L733 790V715Z" fill="#122a63" />
                <path d="M732 714L766 720V988L732 984Z" fill="#414141" />
                <path d="M765 330H781V994L765 988Z" fill="#466276" />
                <path d="M781 335H798V984L781 994Z" fill="#82adc6" />
                <path d="M32 328L222 204L770 326L592 456Z" fill="#5a5a5a" />
              </g>
              <g fill="none">
                <path d="M40 325L225 208M225 362L400 252M415 406L590 295M592 448L765 335" stroke="#111" stroke-width="22" />
                <path d="M42 324L225 208M227 361L400 252M417 405L590 295M594 447L765 335" stroke="#5d8195" stroke-width="16" />
                <path d="M42 320L225 204M227 357L400 248M417 401L590 291M594 443L765 331" stroke="#8cb8d0" stroke-width="7" />
                <path d="M222 205L742 322" stroke="#111" stroke-width="16" />
                <path d="M228 206L742 322" stroke="#777474" stroke-width="8" />
                <path d="M33 331L594 457" stroke="#0a0f22" stroke-width="18" />
                <path d="M36 333L590 459" stroke="#203c79" stroke-width="5" />
                <path d="M245 555L432 436" stroke="#111" stroke-width="4" />
                <path d="M218 648L300 600" stroke="#111" stroke-width="12" />
                <path d="M402 434L440 426L475 464V512H460L402 444Z" stroke="#ffc387" stroke-width="7" />
                <path d="M960 550L975 545L1015 598V636L1000 635L960 590" stroke="#ffc387" stroke-width="7" />
                <path d="M720 304Q770 288 820 300" stroke="#d1690f" stroke-width="7" />
              </g>
              <g v-for="(e, i) in [[523, 438, 42, 50, -18], [273, 603, 36, 48, -10], [302, 594, 23, 50, 8], [980, 547, 42, 50, -28], [785, 320, 50, 18, 0]]" :key="i" :transform="`translate(${e[0]} ${e[1]}) rotate(${e[4]})`" fill="none">
                <ellipse :rx="e[2]" :ry="e[3]" stroke="#1f4565" stroke-width="12" />
                <ellipse :rx="e[2]" :ry="e[3]" stroke="#eaf2f7" stroke-width="7" />
              </g>
              <path d="M523 435L480 430Q486 390 523 392ZM273 595L238 580Q250 552 275 555ZM980 547V500Q1022 508 1020 555ZM785 322V338L820 334L830 322Z" fill="#e3e9ec" />
              <g fill="none" stroke-width="7">
                <path d="M523 345V380M278 510V545M302 504V538M979 458V490M838 332L870 340" stroke="#149414" />
                <path d="M438 420L468 427M192 582L224 590M333 574L352 563M735 354L755 342M1034 560L1065 568" stroke="#df1a26" />
                <path d="M785 256V310M526 436L558 416M280 600L314 582M310 598L362 608M943 572L975 552" stroke="#0710c9" stroke-width="10" />
              </g>
              <circle cx="628" cy="541" r="13" fill="#222" stroke="#111" stroke-width="5" /><circle cx="628" cy="541" r="8" fill="none" stroke="#fff" stroke-width="5" />
              <g fill="#111"><circle cx="295" cy="670" r="2" /><circle cx="295" cy="743" r="2" /><circle cx="692" cy="703" r="2" /><circle cx="692" cy="760" r="2" /><circle cx="692" cy="835" r="2" /></g>
            </svg>

            <svg class="viewcube" viewBox="0 0 501 501">
              <g fill="#e1e8ee">
                <path d="M239 65L261 37L284 65ZM239 457H284L261 486ZM66 238V283L37 261ZM456 238V283L486 261Z" />
                <path d="M198 60L202 76Q160 88 122 122L134 137L100 138L102 102L112 112Q150 75 198 60ZM325 60L321 76Q365 90 400 122L388 135L423 138L420 102L411 112Q372 75 325 60Z" />
                <path d="M142 195Q142 182 155 176L215 147Q240 137 262 142L355 163Q380 170 380 195V300Q380 315 368 325L305 375Q290 386 265 382L165 360Q142 353 142 330Z" />
              </g>
              <g fill="#fff">
                <path d="M186 180Q180 184 190 188L270 205Q290 208 305 198L340 172Q345 166 335 163L265 150Q250 147 238 153Z" />
                <path d="M160 232Q160 215 180 220L255 237Q273 243 273 258V340Q273 360 253 356L178 342Q158 337 158 320Z" />
                <path d="M305 255Q305 240 318 228L358 196Q370 188 370 202V285Q370 300 358 311L320 342Q305 352 305 335Z" />
                <circle cx="286" cy="233" r="20" /><ellipse cx="163" cy="203" rx="11" ry="20" transform="rotate(25 163 203)" /><ellipse cx="288" cy="363" rx="20" ry="11" /><ellipse cx="361" cy="186" rx="10" ry="18" transform="rotate(-25 361 186)" />
              </g>
              <path d="M228 134V150" stroke="#2d25de" stroke-width="4" /><path d="M228 150V300" stroke="#a7a4ee" stroke-width="4" />
              <path d="M228 300L139 355" stroke="#e55" stroke-width="3" /><path d="M228 300L380 330" stroke="#67b567" stroke-width="3" />
              <g font-family="Roboto, sans-serif" font-size="38" font-weight="500">
                <text x="216" y="121" fill="#2720df">Z</text><text x="111" y="380" fill="#d9262b">X</text><text x="393" y="351" fill="#169b25">Y</text>
              </g>
              <g font-family="Roboto, sans-serif" fill="#222">
                <text x="180" y="294" transform="rotate(8 180 294)" font-size="32">Right</text>
                <text x="318" y="304" transform="rotate(-34 318 304)" font-size="24">Back</text>
                <text x="288" y="170" transform="rotate(160 288 170)" font-size="24">Left</text>
              </g>
            </svg>
            <button class="plain shade" aria-label="View style"><svg class="i20" viewBox="0 0 20 20" v-html="icons.cube"></svg><svg class="sc" viewBox="0 0 20 20" v-html="icons.caret"></svg></button>
            <button class="fly" aria-label="Show mates"><svg class="i20" viewBox="0 0 20 20" v-html="icons.flyout"></svg></button>
            <div class="ptabs">
              <button v-for="(p, i) in panels" :key="p" :class="['ptab', { on: i === 1 }]" :aria-label="p"><svg class="i20" viewBox="0 0 20 20" v-html="icons[p]"></svg></button>
            </div>
            <div class="meas">
              <svg class="i18" viewBox="0 0 20 20" v-html="icons.tape"></svg>
              <svg class="i20" viewBox="0 0 20 20" v-html="icons.protractor"></svg>
              <svg class="i16" viewBox="0 0 20 20" v-html="icons.scale"></svg>
            </div>
          </section>

          <section class="cpanel">
            <div class="ctab"><a href="#">Configurations</a></div>
            <div class="chead"><svg viewBox="0 0 20 20" v-html="icons.downc"></svg><strong>Configuration</strong><span>Default</span></div>
            <table>
              <thead>
                <tr><th rowspan="2" class="nm">Name</th><th></th></tr>
                <tr><th></th></tr>
              </thead>
              <tbody>
                <tr v-for="c in configs" :key="c[0]" :class="{ cur: c[0] === 'OPEN' }"><td>{{ c[0] }}</td><td class="val">{{ c[1] }}</td></tr>
                <tr><td class="ghost">Name</td></tr>
              </tbody>
            </table>
            <div class="cfoot"></div>
          </section>
        </div>

        <footer class="tabs">
          <button class="plain add" aria-label="Add tab"><svg class="i18" viewBox="0 0 20 20" v-html="icons.plusg"></svg></button>
          <a href="#" class="home" aria-label="Home"><svg class="i20" viewBox="0 0 20 20" v-html="icons.home"></svg></a>
          <a href="#" class="crumb"><span>Grow Chamber</span></a>
          <button v-for="(t, i) in tabs" :key="i" :class="['dtab', t.w, { on: t.active }]"><svg class="i20" viewBox="0 0 20 20" v-html="icons[t.icon]"></svg><span>{{ t.text }}</span></button>
        </footer>
      </div>
      <div class="tip" role="tooltip">Mirror 1 has error: Mate is not consistent.</div>
    </div>

    <div class="taskbar">
      <svg class="weather" viewBox="0 0 20 20"><circle cx="10" cy="10" r="9" fill="#6cb4f0" /></svg>
      <span class="wtext">Temps to drop</span>
      <svg class="win" viewBox="0 0 28 10"><path d="M0 0h13v10H0zM14 0h14v10H14z" fill="#43b3e6" /></svg>
      <div class="tsearch"></div>
      <div class="app"><svg viewBox="0 0 22 22"><circle cx="11" cy="11" r="11" fill="#ea3c2f" /></svg></div>
      <i class="green"></i><i class="dred"></i>
    </div>

    <svg class="ink" fill="none" stroke="#fa0000" stroke-width="4" stroke-linecap="round" stroke-linejoin="round">
      <path d="M53 403L75 406L92 407H120L140 405L167 405" />
      <path d="M62 453L80 450H150L165 452H228" />
      <path d="M106 763H184Q166 758 147 755Q132 750 117 750Q99 749 83 751Q72 753 63 757Q55 760 50 765Q44 770 42 777V787Q45 794 52 798H97L127 801L187 800L213 794L214 783L207 776L190 770L167 762" />
      <path d="M685 980Q687 970 695 960Q700 950 708 943Q717 936 727 935L747 932H783Q792 935 797 938Q804 945 808 953L814 973M810 954L798 938Q797 926 793 924L775 939V942L810 954Z" />
      <path d="M913 969L900 970H815L800 972L787 975Q779 978 776 982Q771 987 771 994V1003Q773 1012 780 1017Q787 1022 797 1023L820 1027H872L893 1017L920 1010L942 997L952 993V982L940 970Q925 963 910 959L893 956L853 953" />
      <path d="M190 780L204 792L198 793L202 801L198 802L195 796L190 800Z" fill="#fff" stroke="#222" stroke-width="1" />
    </svg>
  </div>
</template>

<style>
body { margin: 0; overflow: hidden; }
</style>

<style scoped>
* { box-sizing: border-box; }
.page { position: relative; display: flex; flex-direction: column; height: 100vh; overflow: hidden; font-family: Roboto, "Liberation Sans", sans-serif; font-size: 14px; color: #333; background: #fff; }
svg { display: block; flex: none; }
button, input, select { font: inherit; color: inherit; }
a { color: inherit; text-decoration: none; }
.plain { display: flex; align-items: center; justify-content: center; padding: 0; border: 0; background: none; flex: none; }
.i16 { width: 16px; height: 16px; }
.i18 { width: 18px; height: 18px; }
.i20 { width: 20px; height: 20px; }

.strip { display: flex; height: 50px; flex: none; padding: 8px 0 0 15px; background: #ffd9b9; font-family: "Open Sans", "Noto Sans", sans-serif; }
.btab { position: relative; display: flex; align-items: center; width: 291px; padding: 0 12px 8px 10px; border-radius: 14px 14px 0 0; background: #fff6f2; }
.btab::before, .btab::after { content: ""; position: absolute; bottom: 0; width: 15px; height: 15px; }
.btab::before { left: -15px; background: radial-gradient(circle at 0 0, transparent 14px, #fff6f2 15px); }
.btab::after { right: -15px; background: radial-gradient(circle at 100% 0, transparent 14px, #fff6f2 15px); }
.btitle { width: 209px; margin: 0 13px 0 10px; overflow: hidden; white-space: nowrap; font-size: 14px; color: #2b211d; -webkit-mask-image: linear-gradient(90deg, #000 185px, transparent 213px); mask-image: linear-gradient(90deg, #000 185px, transparent 213px); }
.newtab { width: 50px; height: 34px; }
.address { display: flex; align-items: center; height: 58px; flex: none; padding: 0 0 0 5px; background: #fff6f2; font-family: "Open Sans", "Noto Sans", sans-serif; }
.nav { width: 45px; }
.omni { display: flex; align-items: center; flex: 1; height: 42px; margin-left: 10px; padding-left: 6px; border-radius: 21px 0 0 21px; background: #efe7e3; }
.site { width: 30px; height: 30px; border-radius: 50%; background: #fff6f2; }
.url { margin-left: 10px; white-space: nowrap; font-size: 17px; color: #55463f; }
.url b { font-weight: 400; color: #241b17; }
.marks { display: flex; align-items: center; height: 43px; flex: none; padding: 0 0 9px 15px; overflow: hidden; border-bottom: 1px solid #f1d9c9; background: #fff6f2; font-family: "Open Sans", "Noto Sans", sans-serif; }
.msep { width: 3px; height: 20px; margin: 0 18px 0 17px; border-radius: 2px; background: #ffd9b9; flex: none; }
.mark { display: flex; align-items: center; gap: 7px; margin-right: 26px; flex: none; font-size: 14px; color: #4c4039; white-space: nowrap; }

.head { display: flex; align-items: center; height: 40px; flex: none; padding-left: 12px; background: #e9e9e9; }
.logo { width: 28px; height: 28px; }
.brand { width: 88px; margin: 0 12px 4px 7px; font-family: Inter, sans-serif; font-size: 22px; font-weight: 300; line-height: 28px; color: #666; }
.burger { display: flex; flex-direction: column; gap: 4px; width: 16px; padding: 0; border: 0; background: none; }
.burger i { height: 3px; background: #222; }
h1 { margin: 2px 6px 0 12px; font-size: 23px; line-height: 28px; font-weight: 700; white-space: nowrap; }
.branch { width: 46px; padding-top: 5px; font-size: 16px; color: #999; }
.hg { margin-left: 10px; }
.hc { margin-left: 9px; }
.hd { margin-left: 12px; }
.cnt { margin-left: 5px; font-size: 16px; }
.cnt.wide { margin-left: 6px; }

.work { position: relative; display: flex; flex: 1; min-height: 0; border-bottom: 1px solid #b9b0ae; }
.rail { display: flex; flex-direction: column; width: 40px; flex: none; border-right: 1px solid #ccc; border-top: 1px solid #ccc; background: #fafafa; }
.railb { height: 35px; }
.railb:first-child { height: 34px; }
.lined { height: 36px; border-top: 1px solid #ccc; }
.last { margin-top: auto; height: 30px; }
.main { display: flex; flex-direction: column; flex: 1; min-width: 0; }
.tools { display: flex; align-items: center; height: 36px; flex: none; padding-left: 1px; overflow: hidden; }
.tool { width: 34px; height: 34px; }
.insert { width: 78px; gap: 6px; }
.tsep { width: 2px; height: 26px; margin: 0 1px; background: #d0d0d0; flex: none; }
.content { display: flex; flex: 1; min-height: 0; }

.side { display: flex; flex-direction: column; width: 318px; flex: none; border-top: 1px solid #ccc; border-right: 1px solid #ccc; }
.srow { display: flex; justify-content: space-between; align-items: center; padding: 0 10px 0 4px; }
.srow strong { font-weight: 500; }
.title { height: 32px; flex: none; }
.cfg { display: flex; align-items: flex-start; height: 49px; flex: none; margin-right: 5px; padding: 2px 5px 0 7px; border-bottom: 1px solid #ccc; }
.cfg label { width: 76px; line-height: 32px; font-size: 12px; color: #555; }
.selwrap { position: relative; flex: 1; border-bottom: 1px solid #ccc; }
.selwrap select { width: 100%; height: 27px; padding: 0 6px; border: 0; background: none; appearance: none; }
.selcaret { position: absolute; right: 5px; top: 9px; width: 9px; height: 9px; }
.filter { display: flex; align-items: center; height: 44px; flex: none; padding: 0 15px 0 9px; }
.filter input { flex: 1; min-width: 0; height: 30px; margin: 0 13px 0 12px; padding: 0 6px; border: 1px solid #aaa; border-radius: 3px; outline: none; }
.filter input::placeholder { font-style: italic; color: #777; opacity: 1; }
.inst { height: 17px; flex: none; }
.treewrap { display: flex; flex: 1; min-height: 0; margin-top: 6px; border-bottom: 1px solid #ccc; }
.tree { flex: 1; min-width: 0; overflow: hidden; }
.row { position: relative; display: flex; align-items: center; height: 26px; }
.row.hover { background: linear-gradient(#def0f9, #def0f9) 0 1px / 100% 24px no-repeat; }
.err .name { color: #b4283a; }
.chev { width: 20px; flex: none; }
.chev svg { width: 14px; height: 14px; margin: 0 3px; }
.l0 .chev { width: 4px; }
.l2 { padding-left: 19px; }
.l3 { padding-left: 38px; }
.ricon { width: 20px; height: 20px; margin: 0 1px 0 5px; }
.l0 .ricon { margin-left: 1px; }
.ricon.foldererr, .ricon.folder { margin: 0 2px 0 4px; }
.ricon.down { margin-left: 2px; }
.name { flex: 1; min-width: 0; white-space: nowrap; }
.name.bare { padding-left: 3px; }
.flags { display: flex; align-items: center; }
.slot { width: 20px; }
.dot { display: block; width: 7px; height: 7px; margin-left: 6px; border-radius: 50%; background: #759fd2; }
.eyes { display: flex; justify-content: flex-end; width: 50px; padding-right: 12px; flex: none; }
.guide { position: absolute; top: 0; bottom: 0; width: 1px; background: #ccc; }
.guide.end { bottom: 1px; }
.guide.end::after { content: ""; position: absolute; left: -4px; bottom: 0; width: 9px; height: 1px; background: #ccc; }
.g1 { left: 9px; }
.g2 { left: 28px; }
.scroll { display: flex; flex-direction: column; align-items: center; width: 19px; margin-right: 5px; padding: 7px 0; background: #fafafa; }
.up { border: 6px solid transparent; border-top: 0; border-bottom: 9px solid #888; }
.thumb { width: 11px; height: 272px; margin-top: 7px; border-radius: 6px; background: #888; }
.grow { flex: 1; }
.dn { border: 6px solid transparent; border-bottom: 0; border-top: 9px solid #777; }

.view { position: relative; flex: 1; min-width: 0; overflow: hidden; }
.model { position: absolute; left: 22px; top: 193px; width: 370px; height: 340px; }
.viewcube { position: absolute; right: 10px; top: 3px; width: 167px; height: 167px; }
.shade { position: absolute; right: 20px; top: 146px; gap: 7px; }
.sc { width: 8px; height: 8px; }
.fly { position: absolute; left: 0; top: 356px; display: flex; align-items: center; justify-content: center; width: 32px; height: 34px; padding: 0; border: 1px solid #aaa; border-left: 0; background: #fff; }
.ptabs { position: absolute; right: -1px; top: 274px; border-top: 1px solid #aaa; }
.ptab { display: flex; align-items: center; justify-content: center; width: 33px; height: 33px; padding: 0; border: 1px solid #aaa; border-top: 0; background: #e9e9e9; }
.ptab.on { border-right-color: #fff; background: #fff; }
.meas { position: absolute; right: 12px; bottom: 4px; display: flex; gap: 16px; align-items: center; }

.cpanel { display: flex; flex-direction: column; width: 164px; flex: none; padding-left: 5px; overflow: hidden; border-left: 1px solid #ccc; border-top: 1px solid #ccc; }
.ctab { height: 30px; flex: none; padding: 9px 0 0 145px; border-bottom: 2px solid #1650b8; color: #1650b8; font-weight: 500; line-height: 17px; overflow: hidden; white-space: nowrap; }
.chead { display: flex; align-items: center; height: 33px; flex: none; margin-top: 3px; padding-left: 5px; border: 1px solid #aaa; border-bottom: 0; border-right: 0; background: #e9e9e9; white-space: nowrap; }
.chead svg { width: 12px; height: 12px; }
.chead strong { margin: 0 5px 0 3px; font-size: 16px; font-weight: 500; }
.chead span { font-weight: 500; color: #999; }
table { width: 300px; table-layout: fixed; border-collapse: collapse; }
th, td { height: 34px; padding: 0 6px; border: 1px solid #aaa; text-align: left; white-space: nowrap; }
th { background: #e9e9e9; }
.nm { width: 140px; padding-bottom: 8px; text-align: center; vertical-align: bottom; font-size: 15px; }
.cur td:first-child { box-shadow: inset 4px 0 #1650b8; color: #1650b8; font-weight: 500; }
.val { padding-left: 7px; }
td.ghost { font-style: italic; color: #777; }
.cfoot { height: 41px; margin-top: auto; flex: none; border: 1px solid #ccc; border-right: 0; background: #eee; }

.tabs { display: flex; height: 30px; flex: none; padding-bottom: 3px; overflow: hidden; background: #d6d6d6; color: #666; }
.add { width: 33px; }
.home { display: flex; align-items: center; justify-content: center; width: 43px; padding-right: 7px; flex: none; background: #e9e9e9; clip-path: polygon(0 0, 80% 0, 100% 50%, 80% 100%, 0 100%); }
.crumb { display: flex; align-items: center; width: 137px; margin: 0 2px 0 -8px; padding: 0 0 3px 24px; flex: none; background: #fff; clip-path: polygon(0 0, 94% 0, 100% 50%, 94% 100%, 0 100%, 6% 50%); white-space: nowrap; }
.dtab { display: flex; align-items: center; gap: 4px; margin-right: 2px; padding: 0 0 0 11px; flex: none; border: 0; border-radius: 0 0 5px 5px; background: #e9e9e9; white-space: nowrap; }
.dtab svg { width: 18px; height: 18px; }
.dtab.on { box-shadow: inset 0 -2px #1650b8; background: #fff; color: #333; }
.w200 { width: 200px; }
.w161 { width: 161px; }
.w176 { width: 176px; }
.w172 { width: 172px; }
.w87 { width: 87px; }
.w149 { width: 149px; }

.tip { position: absolute; left: 335px; top: 575px; height: 27px; padding: 0 5px; background: #d1dae4; line-height: 26px; font-size: 12px; font-weight: 500; white-space: nowrap; box-shadow: 0 1px 3px #bbb; }

.taskbar { display: flex; height: 16px; flex: none; overflow: hidden; background: #f3ddd8; }
.weather { width: 14px; height: 14px; margin: 14px 22px 0 29px; }
.wtext { width: 494px; padding-top: 9px; font-family: "Open Sans", "Noto Sans", sans-serif; font-size: 15px; color: #222; flex: none; }
.win { width: 28px; height: 10px; margin: 15px 22px 0 0; }
.tsearch { width: 265px; height: 30px; margin: 10px 122px 0 0; border: 1px solid #e6cdc8; border-radius: 15px; background: #fdf5f2; flex: none; }
.app { width: 43px; height: 30px; margin-top: 5px; padding: 9px 0 0 12px; border-radius: 5px; background: #fbf0ed; flex: none; }
.app svg { width: 22px; height: 22px; }
.green { width: 19px; height: 4px; margin: 15px 32px 0 27px; background: #8ad36c; }
.dred { width: 26px; height: 4px; margin-top: 14px; background: #b50d12; }

.ink { position: absolute; left: 0; top: 0; width: 100%; height: 100%; pointer-events: none; }
</style>
